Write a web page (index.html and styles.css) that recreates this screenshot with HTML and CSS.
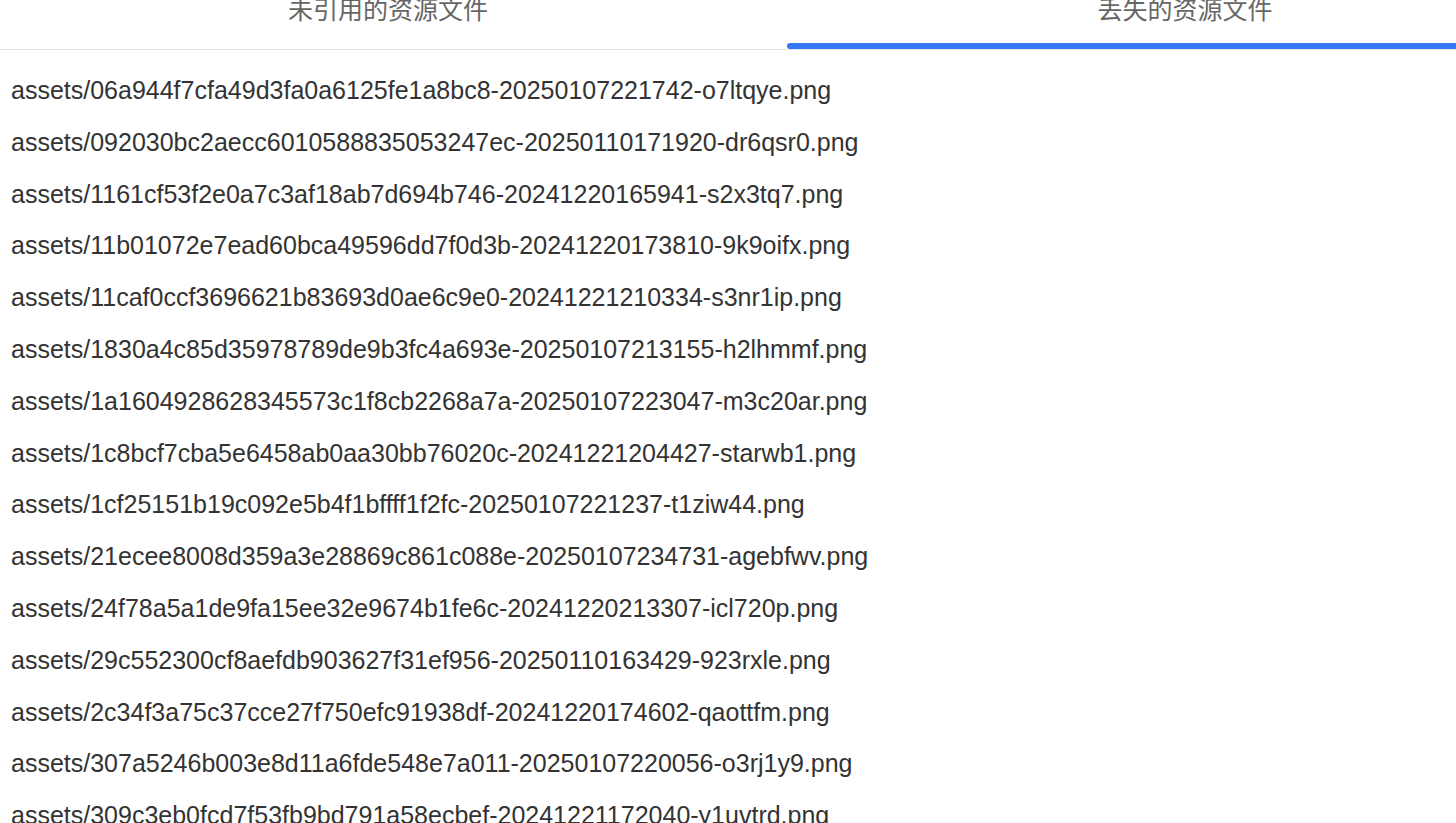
FILE: index.html
```html
<!DOCTYPE html>
<html lang="zh-CN">
<head>
<meta charset="utf-8">
<title>资源文件</title>
<link rel="stylesheet" href="styles.css">
</head>
<body>
<div class="page">
  <div class="tabs">
    <div class="tab tab-first"><span class="tab-label">未引用的资源文件</span></div>
    <div class="tab tab-second tab-active"><span class="tab-label">丢失的资源文件</span><span class="tab-indicator"></span></div>
  </div>
  <ul class="file-list">
    <li class="file-item">assets/06a944f7cfa49d3fa0a6125fe1a8bc8-20250107221742-o7ltqye.png</li>
    <li class="file-item">assets/092030bc2aecc6010588835053247ec-20250110171920-dr6qsr0.png</li>
    <li class="file-item">assets/1161cf53f2e0a7c3af18ab7d694b746-20241220165941-s2x3tq7.png</li>
    <li class="file-item">assets/11b01072e7ead60bca49596dd7f0d3b-20241220173810-9k9oifx.png</li>
    <li class="file-item">assets/11caf0ccf3696621b83693d0ae6c9e0-20241221210334-s3nr1ip.png</li>
    <li class="file-item">assets/1830a4c85d35978789de9b3fc4a693e-20250107213155-h2lhmmf.png</li>
    <li class="file-item">assets/1a1604928628345573c1f8cb2268a7a-20250107223047-m3c20ar.png</li>
    <li class="file-item">assets/1c8bcf7cba5e6458ab0aa30bb76020c-20241221204427-starwb1.png</li>
    <li class="file-item">assets/1cf25151b19c092e5b4f1bffff1f2fc-20250107221237-t1ziw44.png</li>
    <li class="file-item">assets/21ecee8008d359a3e28869c861c088e-20250107234731-agebfwv.png</li>
    <li class="file-item">assets/24f78a5a1de9fa15ee32e9674b1fe6c-20241220213307-icl720p.png</li>
    <li class="file-item">assets/29c552300cf8aefdb903627f31ef956-20250110163429-923rxle.png</li>
    <li class="file-item">assets/2c34f3a75c37cce27f750efc91938df-20241220174602-qaottfm.png</li>
    <li class="file-item">assets/307a5246b003e8d11a6fde548e7a011-20250107220056-o3rj1y9.png</li>
    <li class="file-item">assets/309c3eb0fcd7f53fb9bd791a58ecbef-20241221172040-y1uvtrd.png</li>
  </ul>
</div>
</body>
</html>
```
FILE: styles.css
```css
html, body {
  margin: 0;
  padding: 0;
  background: #ffffff;
  overflow: hidden;
}
.page {
  width: 1456px;
  height: 823px;
  overflow: hidden;
  font-family: "Liberation Sans", Arial, "Noto Sans CJK SC", sans-serif;
}
.tabs {
  display: flex;
  margin-top: -4px;
  height: 53px;
  border-bottom: 1px solid #e4e4e4;
  width: 1594px;
}
.tab {
  position: relative;
  flex: none;
  text-align: center;
  font-family: "Noto Sans CJK SC", "Liberation Sans", sans-serif;
  font-size: 25px;
  line-height: 25px;
  color: #666666;
}
.tab-first {
  width: 776px;
}
.tab-second {
  width: 818px;
}
.tab-label {
  display: block;
}
.tab-indicator {
  position: absolute;
  left: 11px;
  right: 11px;
  bottom: 0;
  height: 6px;
  border-radius: 3px;
  background: #3478f6;
}
.file-list {
  list-style: none;
  margin: 0;
  padding: 15px 0 0 11px;
}
.file-item {
  font-size: 25px;
  line-height: 51.8px;
  color: #333333;
  white-space: nowrap;
}
```
